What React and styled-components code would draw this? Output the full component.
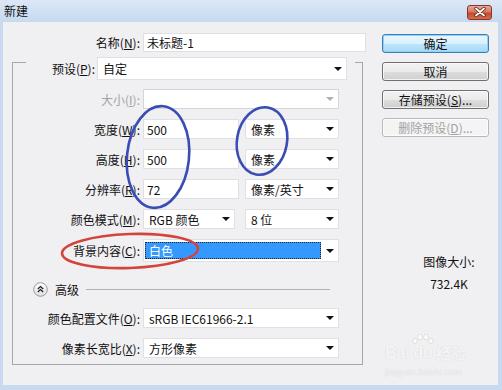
import React from "react";
import styled, { createGlobalStyle } from "styled-components";

const GlobalStyle = createGlobalStyle`
  html, body { margin: 0; padding: 0; }
  body {
    width: 502px; height: 390px; overflow: hidden;
    background: #c7daef;
    font-family: "Noto Sans CJK SC", "Noto Sans", sans-serif;
    font-size: 12px;
    color: #111;
  }
`;

const Window = styled.div`
  position: relative;
  width: 502px;
  height: 390px;
  display: flex;
  flex-direction: column;
  background: #c7daef;
`;

const TitleBar = styled.div`
  height: 22px;
  flex: none;
  display: flex;
  align-items: center;
  justify-content: space-between;
  padding: 0 10px 0 4px;
  background: linear-gradient(#dce8f6, #c6d9ee);
  line-height: 16px;
`;

const CloseBtn = styled.div`
  width: 25px;
  height: 15px;
  margin-top: 2px;
  box-sizing: border-box;
  border: 1px solid #8a3428;
  border-radius: 3px;
  background: linear-gradient(#e9a898 0%, #d9775f 45%, #c24a31 55%, #d56d4f 100%);
  display: flex;
  align-items: center;
  justify-content: center;
`;

const Frame = styled.div`
  flex: 1;
  display: flex;
  padding: 0 4px 5px 3px;
`;

const Body = styled.div`
  flex: 1;
  display: flex;
  background: #f0eff2;
`;

const LeftCol = styled.div`
  width: 370px;
  padding-top: 11px;
  display: flex;
  flex-direction: column;
`;

const RightCol = styled.div`
  flex: 1;
  padding: 12px 0 0 9px;
  display: flex;
  flex-direction: column;
  gap: 9px;
`;

const Row = styled.div`
  display: grid;
  grid-template-columns: ${p => p.$label}px auto;
  column-gap: 3px;
  align-items: center;
  height: ${p => p.$h || 20}px;
  margin-top: ${p => p.$mt || 0}px;
`;

const Label = styled.span`
  text-align: right;
  white-space: nowrap;
  color: ${p => (p.$disabled ? "#a3a3a3" : "#111")};
`;

const U = styled.span`
  text-decoration: underline;
  text-underline-offset: 1px;
`;

const Controls = styled.div`
  display: flex;
  gap: ${p => p.$gap || 6}px;
  height: 100%;
`;

const TextBox = styled.div`
  width: ${p => p.$w}px;
  height: 100%;
  box-sizing: border-box;
  background: #fff;
  border: 1px solid #dfdfe4;
  padding-left: 3px;
  display: flex;
  align-items: center;
  white-space: nowrap;
`;

const SelectBox = styled.div`
  width: ${p => p.$w}px;
  height: 100%;
  box-sizing: border-box;
  background: #fff;
  border: 1px solid ${p => (p.$disabled ? "#d6d6d8" : "#dfdfe4")};
  padding: ${p => (p.$hl ? "2px 0 2px 1px" : "0 0 0 5px")};
  display: flex;
  align-items: center;
  white-space: nowrap;
`;

const SelectValue = styled.span`
  flex: 1;
`;

const Highlight = styled.span`
  flex: 1;
  align-self: stretch;
  margin-right: 5px;
  background: #3399ff;
  color: #fff;
  outline: 1px dotted #222;
  outline-offset: -1px;
  padding-left: 4px;
  display: flex;
  align-items: center;
`;

const Caret = styled.span`
  width: 0;
  height: 0;
  margin-right: 4px;
  border-left: 4px solid transparent;
  border-right: 4px solid transparent;
  border-top: 4px solid ${p => (p.$disabled ? "#b0b0b0" : "#111")};
`;

const Group = styled.div`
  margin: 5px 0 0 9px;
  width: 351px;
  display: flex;
  flex-direction: column;
`;

const GroupHead = styled.div`
  display: flex;
  height: 23px;
`;

const HeadEdge = styled.div`
  width: ${p => p.$w}px;
  margin-top: 5px;
  box-sizing: border-box;
  border-top: 1px solid #a7a7a9;
  border-left: ${p => (p.$side === "left" ? "1px solid #a7a7a9" : "none")};
  border-right: ${p => (p.$side === "right" ? "1px solid #a7a7a9" : "none")};
`;

const PresetRow = styled.div`
  flex: 1;
  display: flex;
  align-items: center;
  padding-right: 8px;
`;

const PresetLabel = styled(Label)`
  width: 69px;
  margin-right: 2px;
`;

const GroupBody = styled.div`
  border: 1px solid #a7a7a9;
  border-top: none;
  padding: 9px 0 6px 0;
  display: flex;
  flex-direction: column;
  gap: 10px;
`;

const AdvRow = styled.div`
  height: 16px;
  margin: 12px 32px 0 20px;
  display: flex;
  align-items: center;
  gap: 7px;
`;

const AdvLine = styled.div`
  flex: 1;
  height: 1px;
  background: #b3b3b6;
`;

const Button = styled.div`
  width: 107px;
  height: 19px;
  box-sizing: border-box;
  border-radius: 3px;
  display: flex;
  align-items: center;
  justify-content: center;
  white-space: nowrap;
  border: 1px solid ${p => (p.$primary ? "#3c7fb1" : p.$disabled ? "#b5b9bd" : "#707070")};
  color: ${p => (p.$disabled ? "#a2a2a2" : "#111")};
  background: ${p =>
    p.$primary
      ? "linear-gradient(#eaf6fd 0%, #d9f0fc 50%, #bee6fd 51%, #a7d9f5 100%)"
      : p.$disabled
      ? "#f4f4f4"
      : "linear-gradient(#f2f2f2 0%, #ebebeb 50%, #dddddd 51%, #cfcfcf 100%)"};
  box-shadow: ${p => (p.$primary ? "inset 0 0 0 1px #8fd2f7" : "inset 0 0 0 1px rgba(255,255,255,0.7)")};
`;

const Info = styled.div`
  margin-top: 105px;
  padding-left: 18px;
  text-align: center;
  line-height: 22px;
`;

const Overlay = styled.svg`
  position: absolute;
  left: 0;
  top: 0;
  pointer-events: none;
`;

const Watermark = styled.div`
  position: absolute;
  left: 385px;
  top: 334px;
  width: 92px;
  color: rgba(255, 255, 255, 0.8);
  text-shadow: 0 0 1px rgba(120, 120, 120, 0.3);
  font-family: "Liberation Sans", sans-serif;
  pointer-events: none;
`;

const WmTop = styled.div`
  display: flex;
  align-items: flex-end;
  gap: 2px;
  font-size: 16px;
  font-weight: bold;
  line-height: 18px;
`;

const WmPaw = styled.span`
  display: flex;
  flex-direction: column;
  align-items: center;
`;

const WmCjk = styled.span`
  font-family: "Noto Sans CJK SC", sans-serif;
  font-size: 15px;
  font-weight: bold;
`;

const WmSub = styled.div`
  font-size: 9px;
  color: rgba(255, 255, 255, 0.65);
  margin-top: 5px;
  letter-spacing: 0.3px;
`;

const Select = ({ w, disabled, children }) => (
  <SelectBox $w={w} $disabled={disabled}>
    <SelectValue>{children}</SelectValue>
    <Caret $disabled={disabled} />
  </SelectBox>
);

const AdvIcon = () => (
  <svg width="15" height="15" viewBox="0 0 15 15">
    <defs>
      <linearGradient id="advg" x1="0" y1="0" x2="0" y2="1">
        <stop offset="0" stopColor="#ffffff" />
        <stop offset="1" stopColor="#dedede" />
      </linearGradient>
    </defs>
    <circle cx="7.5" cy="7.5" r="6.8" fill="url(#advg)" stroke="#9a9a9a" strokeWidth="1" />
    <path d="M4.8 7 L7.5 4.6 L10.2 7 M4.8 10 L7.5 7.6 L10.2 10" fill="none" stroke="#222" strokeWidth="1.3" />
  </svg>
);

const App = () => {
  return (
    <Window>
      <GlobalStyle />
      <TitleBar>
        <span>新建</span>
        <CloseBtn>
          <svg width="12" height="10" viewBox="0 0 12 10">
            <path d="M2 1.5 L10 8.5 M10 1.5 L2 8.5" stroke="#5a2018" strokeWidth="3.4" strokeLinecap="round" />
            <path d="M2 1.5 L10 8.5 M10 1.5 L2 8.5" stroke="#ffffff" strokeWidth="1.8" strokeLinecap="round" />
          </svg>
        </CloseBtn>
      </TitleBar>
      <Frame>
        <Body>
          <LeftCol>
            <Row $label={137} $h={19}>
              <Label>名称(<U>N</U>):</Label>
              <TextBox $w={223}>未标题-1</TextBox>
            </Row>
            <Group>
              <GroupHead>
                <HeadEdge $w={14} $side="left" />
                <PresetRow>
                  <PresetLabel>预设(<U>P</U>):</PresetLabel>
                  <Select w={250}>自定</Select>
                </PresetRow>
                <HeadEdge $w={8} $side="right" />
              </GroupHead>
              <GroupBody>
                <Row $label={127}>
                  <Label $disabled>大小(<U>I</U>):</Label>
                  <Select w={196} disabled />
                </Row>
                <Row $label={127}>
                  <Label>宽度(<U>W</U>):</Label>
                  <Controls>
                    <TextBox $w={96}>500</TextBox>
                    <Select w={94}>像素</Select>
                  </Controls>
                </Row>
                <Row $label={127}>
                  <Label>高度(<U>H</U>):</Label>
                  <Controls>
                    <TextBox $w={96}>500</TextBox>
                    <Select w={94}>像素</Select>
                  </Controls>
                </Row>
                <Row $label={127}>
                  <Label>分辨率(<U>R</U>):</Label>
                  <Controls>
                    <TextBox $w={96}>72</TextBox>
                    <Select w={94}>像素/英寸</Select>
                  </Controls>
                </Row>
                <Row $label={127}>
                  <Label>颜色模式(<U>M</U>):</Label>
                  <Controls $gap={10}>
                    <Select w={92}>RGB 颜色</Select>
                    <Select w={94}>8 位</Select>
                  </Controls>
                </Row>
                <Row $label={127}>
                  <Label>背景内容(<U>C</U>):</Label>
                  <SelectBox $w={196} $hl>
                    <Highlight>白色</Highlight>
                    <Caret />
                  </SelectBox>
                </Row>
                <AdvRow>
                  <AdvIcon />
                  <span>高级</span>
                  <AdvLine />
                </AdvRow>
                <Row $label={127} $mt={1}>
                  <Label>颜色配置文件(<U>O</U>):</Label>
                  <Select w={196}>sRGB IEC61966-2.1</Select>
                </Row>
                <Row $label={127}>
                  <Label>像素长宽比(<U>X</U>):</Label>
                  <Select w={196}>方形像素</Select>
                </Row>
              </GroupBody>
            </Group>
          </LeftCol>
          <RightCol>
            <Button $primary>确定</Button>
            <Button>取消</Button>
            <Button>存储预设(<U>S</U>)...</Button>
            <Button $disabled>删除预设(<U>D</U>)...</Button>
            <Info>
              <div>图像大小:</div>
              <div>732.4K</div>
            </Info>
          </RightCol>
        </Body>
      </Frame>
      <Overlay width="502" height="390" viewBox="0 0 502 390">
        <ellipse cx="158" cy="157" rx="31" ry="51" transform="rotate(6 158 157)" fill="none" stroke="#3a4db4" strokeWidth="2.6" />
        <ellipse cx="262" cy="141" rx="25" ry="34" transform="rotate(10 262 141)" fill="none" stroke="#3a4db4" strokeWidth="2.6" />
        <ellipse cx="130" cy="251" rx="68" ry="17" transform="rotate(-2 130 251)" fill="none" stroke="#d2453c" strokeWidth="2.6" />
      </Overlay>
      <Watermark>
        <WmTop>
          <span>Bai</span>
          <WmPaw>
            <svg width="22" height="10" viewBox="0 0 22 10">
              <g fill="rgba(255,255,255,0.85)" stroke="rgba(140,140,140,0.35)" strokeWidth="0.6">
                <ellipse cx="3" cy="7" rx="2.2" ry="2.6" />
                <ellipse cx="8" cy="3" rx="2.2" ry="2.8" />
                <ellipse cx="14" cy="3" rx="2.2" ry="2.8" />
                <ellipse cx="19" cy="7" rx="2.2" ry="2.6" />
              </g>
            </svg>
            <span>du</span>
          </WmPaw>
          <WmCjk>经验</WmCjk>
        </WmTop>
        <WmSub>jingyan.baidu.com</WmSub>
      </Watermark>
    </Window>
  );
};

export default App;
